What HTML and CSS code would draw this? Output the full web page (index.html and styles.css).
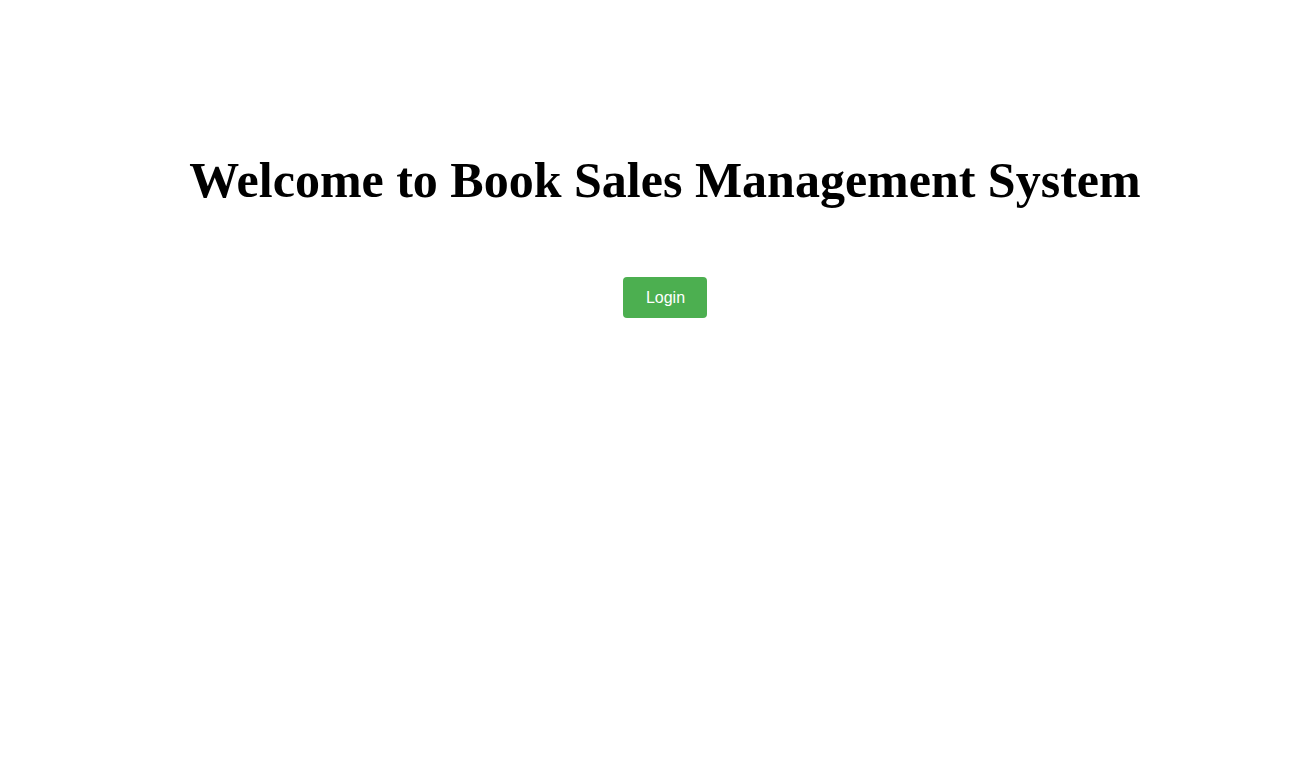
FILE: index.html
```html
<!DOCTYPE html>
<html>
<head>
<meta charset="utf-8">
<link rel="stylesheet" href="styles.css">
</head>
<body>
<div class="page">
  <h1 class="title">Welcome to Book Sales Management System</h1>
  <div class="actions">
    <button class="login-btn">Login</button>
  </div>
</div>
</body>
</html>
```

FILE: styles.css
```css
html, body {
  margin: 0;
  padding: 0;
  background: #ffffff;
}
.page {
  padding: 150px 0 0 24px;
  text-align: center;
  font-family: "Liberation Serif", "Times New Roman", serif;
}
.title {
  margin: 0;
  font-size: 50px;
  font-weight: bold;
  line-height: 1.2;
  color: #000;
}
.actions {
  margin-top: 67px;
}
.login-btn {
  background: #4CAF50;
  color: #fff;
  border: none;
  border-radius: 4px;
  padding: 11px 22px 11px 23px;
  font-family: "Liberation Sans", Arial, sans-serif;
  font-size: 16px;
  line-height: 19px;
  cursor: pointer;
}
```
